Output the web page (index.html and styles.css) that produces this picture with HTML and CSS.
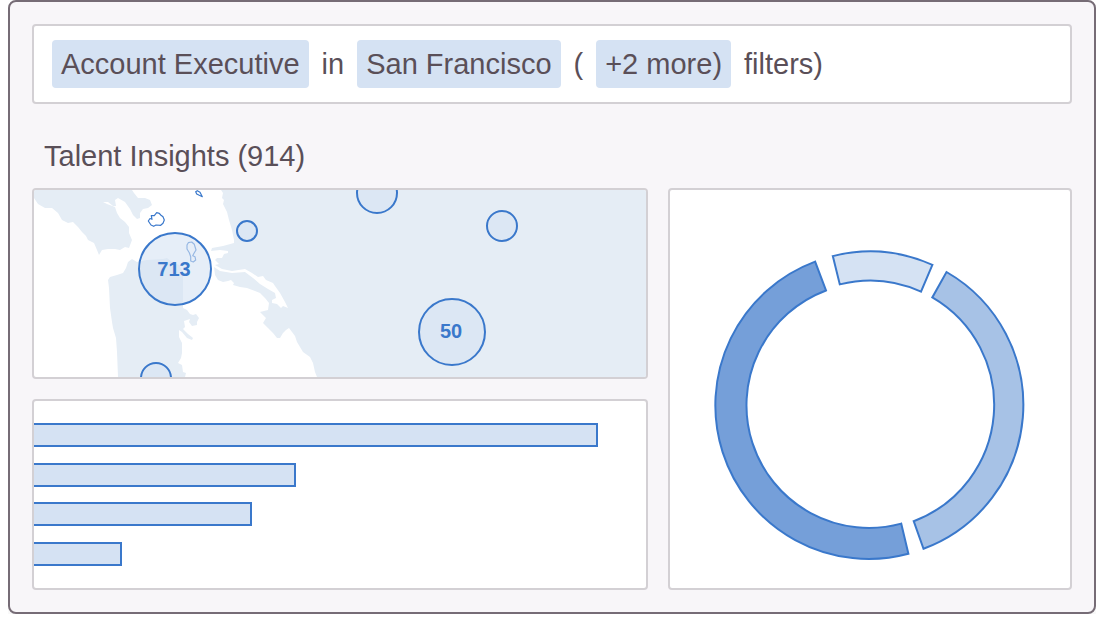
FILE: index.html
```html
<!DOCTYPE html>
<html lang="en">
<head>
    <meta charset="UTF-8">
    <meta name="viewport" content="width=device-width, initial-scale=1.0">
    <title>Talent Insights</title>
    <link rel="stylesheet" href="styles.css">
</head>
<body>
    <main class="frame">
        <div class="search">
            <button type="button" class="chip">Account Executive</button>
            <span>in</span>
            <button type="button" class="chip">San Francisco</button>
            <span>(</span>
            <button type="button" class="chip">+2 more)</button>
            <span>filters)</span>
        </div>

        <h1 class="title">Talent Insights (914)</h1>

        <div class="panels">
            <section class="panel map">
                <svg viewBox="0 0 612 187" preserveAspectRatio="xMinYMin slice">
                    <!-- land -->
                    <g class="land">
                        <path d="M0 0V8L4 14L11 18L18 18L24 23L28 30L34 33L39 32L44 37L48 42L52 46L54 50L60 53L63 60L65 65L68 60L74 59L81 59L86 60L91 57L95 58L98 50L95 43L95 37L91 32L86 28L83 23L81 17L73 14L69 12L74 12L79 16L82 16L81 10L84 8L91 12L96 19L99 25L103 29L106 28L106 23L109 19L114 18L118 15L116 10L111 8L104 8L100 3L98 0Z"/>
                        <path d="M84 187L83 162L82 148L79 138L78 132L76 118L75 98L74 90L76 87L83 85L89 83L92 78L94 72L98 69L103 72L108 71L113 70L129 69L133 68L138 72L145 75L149 82V118L153 120L156 124L159 125L162 124L165 128L163 132L163 135L158 136L155 132L156 129L153 130L150 131L151 137L149 139L154 144L159 148L158 150L153 148L148 142L145 140L145 147L148 153L148 163L147 168L144 173L148 175L149 182L152 183L151 187Z"/>
                        <path d="M187 0L189 3L188 8L190 10L189 14L193 22L195 30L198 40L200 50L200 53L189 56L178 58L177 61L186 60L194 61L194 63L190 64L188 68L183 68L181 70L185 74L181 75L188 79L198 81L211 79L218 83L224 87L229 86L232 90L239 93L241 96L246 103L251 112L254 118L249 116L247 118L243 114L238 113L238 110L242 108L241 103L234 99L226 94L219 88L211 82L198 83L186 81L180 77L181 85L184 90L189 92L194 91L197 90L200 93L199 95L206 97L213 98L221 101L226 103L231 108L235 113L234 120L226 122L232 128L229 133L234 138L239 143L243 148L246 148L249 143L252 140L255 138L258 142L261 146L263 152L269 162L276 167L279 173L281 182L283 187H612V0Z"/>
                    </g>
                    <!-- islands -->
                    <g class="island">
                        <path d="M114.3 31L116 28.5L118 29.3L117.3 25.7L120.3 25.7L122.7 22.7L125.3 23.3L126.7 25L129 26.7L130.3 30L129 33.3L126.7 35.3L122 35L119.7 36.3L117 35Z"/>
                        <path d="M154.3 52.7L157.7 52L160.3 54.3L162 60L160 63.3L158.7 65.7L161 66.7L161.7 70L159.3 72L156.7 71L156.7 66.7L155.3 62.7L153 59V55Z"/>
                        <path d="M161.7 1.7L163.3 .7L166 2.3L168.3 6.7L165.3 5.3L162.7 4Z"/>
                    </g>
                    <g class="bubble">
                        <circle cx="141" cy="79" r="36"/>
                        <circle cx="213" cy="41" r="10"/>
                        <circle cx="343" cy="3" r="20"/>
                        <circle cx="468" cy="36" r="15"/>
                        <circle cx="418" cy="142" r="33"/>
                        <circle cx="122" cy="188" r="15"/>
                    </g>
                    <text class="count" x="140" y="86">713</text>
                    <text class="count" x="417" y="148">50</text>
                </svg>
            </section>

            <section class="panel bars">
                <div class="bar" style="width: 92.2%"></div>
                <div class="bar" style="width: 42.8%"></div>
                <div class="bar" style="width: 35.6%"></div>
                <div class="bar" style="width: 14.4%"></div>
            </section>

            <section class="panel donut">
                <svg viewBox="-156 -155 312 310">
                    <path class="light" d="M-37.2 -148.9A153.5 153.5 0 0 1 62.4 -140.2L51 -113.4A124.3 124.3 0 0 0 -30.2 -120.6Z"/>
                    <path class="medium" d="M76.5 -133A153.5 153.5 0 0 1 53.5 143.8L43.7 116.2A124.3 124.3 0 0 0 62.3 -107.6Z"/>
                    <path class="dark" d="M38.4 148.7A153.5 153.5 0 0 1 -54.9 -143.4L-44 -114.5A122.6 122.6 0 0 0 31.2 118.6Z"/>
                </svg>
            </section>
        </div>
    </main>
</body>
</html>
```

FILE: styles.css
```css
* {
    box-sizing: border-box;
}
body {
    margin: 0 8px;
    background: #fff;
    color: #5a4f58;
    font-family: "Liberation Sans", Arial, sans-serif;
    font-size: 29px;
}
.frame {
    padding: 22px;
    background: #f8f6f9;
    border: 2px solid #766c76;
    border-radius: 8px;
    box-shadow: 0 8px 8px rgba(0, 0, 0, 0.05);
}
.search {
    display: flex;
    align-items: center;
    gap: 13px;
    padding: 14px 18px;
    background: #fff;
    border: 2px solid #d3d0d4;
    border-radius: 4px;
}
.chip {
    height: 48px;
    padding: 0 9px;
    background: #d5e2f3;
    border: none;
    border-radius: 4px;
    color: inherit;
    font: inherit;
    cursor: pointer;
}
.title {
    margin: 32px 0 12px;
    padding-left: 12px;
    font-size: 29px;
    font-weight: normal;
    line-height: 40px;
}
.panels {
    display: grid;
    grid-template-columns: 154fr 101fr;
    grid-template-rows: 191px 191px;
    gap: 20px;
}
.panel {
    overflow: hidden;
    background: #fff;
    border: 2px solid #d3d0d4;
    border-radius: 4px;
}
.map svg {
    display: block;
    width: 100%;
    height: 100%;
}
.land {
    fill: #e5edf5;
}
.island {
    fill: #fff;
    stroke: #3a78cb;
    stroke-width: 1.2;
    stroke-linejoin: round;
}
.bubble {
    fill: rgba(213, 226, 243, 0.6);
    stroke: #3a78cb;
    stroke-width: 2;
}
.count {
    fill: #3a78cb;
    font-size: 20px;
    font-weight: bold;
    text-anchor: middle;
}
.bars {
    display: flex;
    flex-direction: column;
    justify-content: space-between;
    padding: 22px 0;
}
.bar {
    height: 24px;
    background: #d5e2f3;
    border: 2px solid #3a78cb;
    border-left: none;
}
.donut {
    grid-column: 2;
    grid-row: 1 / 3;
    display: flex;
    align-items: center;
    justify-content: center;
    padding-top: 32px;
}
.donut svg {
    width: 312px;
    max-width: 100%;
    stroke: #3a78cb;
    stroke-width: 2;
}
.light {
    fill: #d5e2f3;
}
.medium {
    fill: #a7c2e6;
}
.dark {
    fill: #759fd9;
}
```
